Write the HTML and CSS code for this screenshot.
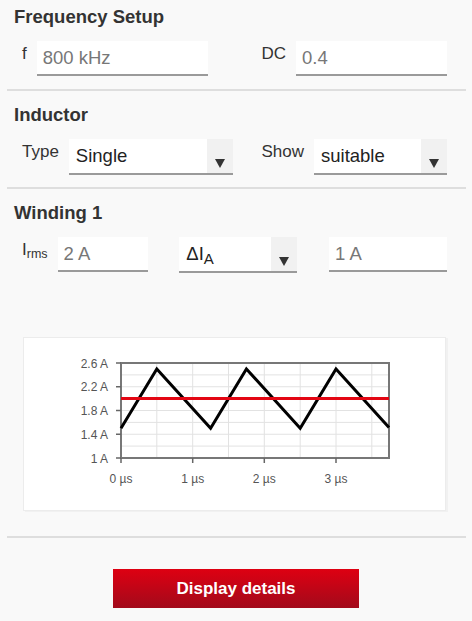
FILE: index.html
```html
<!DOCTYPE html>
<html>
<head>
<meta charset="utf-8">
<link rel="stylesheet" href="styles.css">
</head>
<body>
<section class="section section-first">
  <h2 class="heading">Frequency Setup</h2>
  <div class="row">
    <div class="field"><span class="label">f</span><div class="control input w-f">800 kHz</div></div>
    <div class="field"><span class="label">DC</span><div class="control input w-dc">0.4</div></div>
  </div>
</section>
<section class="section">
  <h2 class="heading">Inductor</h2>
  <div class="row">
    <div class="field"><span class="label">Type</span><div class="control select w-type"><span class="select-text">Single</span><span class="select-arrow"></span></div></div>
    <div class="field"><span class="label">Show</span><div class="control select w-show"><span class="select-text">suitable</span><span class="select-arrow"></span></div></div>
  </div>
</section>
<section class="section section-last">
  <h2 class="heading">Winding 1</h2>
  <div class="row">
    <div class="field"><span class="label">I<sub class="sub-label">rms</sub></span><div class="control input w-irms">2 A</div></div>
    <div class="control select w-delta"><span class="select-text">ΔI<sub class="sub-select">A</sub></span><span class="select-arrow"></span></div>
    <div class="control input w-delta">1 A</div>
  </div>
  <div class="chart-card">
    <svg class="chart" width="421" height="172" viewBox="0 0 421 172">
      <g stroke="#e2e2e2" stroke-width="1">
        <line x1="132.8" y1="25" x2="132.8" y2="120"/>
        <line x1="168.7" y1="25" x2="168.7" y2="120"/>
        <line x1="204.5" y1="25" x2="204.5" y2="120"/>
        <line x1="240.3" y1="25" x2="240.3" y2="120"/>
        <line x1="276.2" y1="25" x2="276.2" y2="120"/>
        <line x1="312" y1="25" x2="312" y2="120"/>
        <line x1="347.8" y1="25" x2="347.8" y2="120"/>
        <line x1="97" y1="36.9" x2="365" y2="36.9"/>
        <line x1="97" y1="48.75" x2="365" y2="48.75"/>
        <line x1="97" y1="60.6" x2="365" y2="60.6"/>
        <line x1="97" y1="72.5" x2="365" y2="72.5"/>
        <line x1="97" y1="84.4" x2="365" y2="84.4"/>
        <line x1="97" y1="96.25" x2="365" y2="96.25"/>
        <line x1="97" y1="108.1" x2="365" y2="108.1"/>
      </g>
      <rect x="97" y="25" width="268" height="95" fill="none" stroke="#777" stroke-width="2"/>
      <g stroke="#666" stroke-width="1.5">
        <line x1="92" y1="25" x2="97" y2="25"/>
        <line x1="92" y1="48.75" x2="97" y2="48.75"/>
        <line x1="92" y1="72.5" x2="97" y2="72.5"/>
        <line x1="92" y1="96.25" x2="97" y2="96.25"/>
        <line x1="92" y1="120" x2="97" y2="120"/>
        <line x1="97" y1="120" x2="97" y2="125"/>
        <line x1="168.7" y1="120" x2="168.7" y2="125"/>
        <line x1="240.3" y1="120" x2="240.3" y2="125"/>
        <line x1="312" y1="120" x2="312" y2="125"/>
      </g>
      <polyline points="97,90.3 132.8,30.9 186.6,90.3 222.4,30.9 276.2,90.3 312,30.9 365,89.5" fill="none" stroke="#000" stroke-width="3" stroke-linejoin="miter"/>
      <line x1="97" y1="60.6" x2="365" y2="60.6" stroke="#e30613" stroke-width="3"/>
      <g class="axis-text" text-anchor="end">
        <text x="84" y="29.5">2.6 A</text>
        <text x="84" y="53.25">2.2 A</text>
        <text x="84" y="77">1.8 A</text>
        <text x="84" y="100.75">1.4 A</text>
        <text x="84" y="124.5">1 A</text>
      </g>
      <g class="axis-text" text-anchor="middle">
        <text x="97" y="145">0 µs</text>
        <text x="168.7" y="145">1 µs</text>
        <text x="240.3" y="145">2 µs</text>
        <text x="312" y="145">3 µs</text>
      </g>
    </svg>
  </div>
</section>
<div class="actions">
  <button class="btn">Display details</button>
</div>
</body>
</html>
```
FILE: styles.css
```css
* { box-sizing: border-box; }

body {
  margin: 0;
  background: #f9f9f9;
  font-family: "Liberation Sans", Arial, sans-serif;
  color: #333;
}

.section {
  margin: 0 6px 0 7px;
  padding: 13px 0 12px;
  border-bottom: 2px solid #dedede;
}

.section-first { padding-top: 6px; padding-bottom: 13px; }
.section-last { padding-bottom: 25px; }

.heading {
  margin: 0 0 13px 7px;
  font-size: 18.5px;
  line-height: 22px;
  font-weight: bold;
  color: #333;
}

.row {
  display: flex;
  justify-content: space-between;
  align-items: flex-start;
  padding: 0 19px 0 15px;
}

.field {
  display: flex;
  align-items: flex-start;
  gap: 10px;
}

.label {
  font-size: 17px;
  line-height: 20px;
  padding-top: 3px;
  color: #333;
}

.sub-label {
  font-size: 12.5px;
  vertical-align: -3px;
  line-height: 0;
}

.control {
  height: 35px;
  background: #fff;
  border-bottom: 2px solid #9a9a9a;
  font-size: 18.5px;
  line-height: 33px;
  padding-left: 6px;
}

.input { color: #777; }

.select {
  display: flex;
  color: #222;
  padding-left: 7px;
  height: 36px;
  line-height: 34px;
}

.select-text { flex: 1; }

.sub-select {
  font-size: 15px;
  vertical-align: -4px;
  line-height: 0;
}

.select-arrow {
  width: 26px;
  background: #f1f1f1;
  display: flex;
  justify-content: center;
  padding-top: 20px;
}

.select-arrow::before {
  content: "";
  width: 0;
  height: 0;
  border-left: 5px solid transparent;
  border-right: 5px solid transparent;
  border-top: 9px solid #333;
}

.w-f { width: 171px; }
.w-dc { width: 151px; }
.w-type { width: 164px; }
.w-show { width: 133px; }
.w-irms { width: 90px; }
.w-delta { width: 118px; }

.chart-card {
  margin: 64px 20px 0 16px;
  height: 174px;
  background: #fff;
  border: 1px solid #ececec;
  box-shadow: 2px 1px 0 #f1f1f1;
}

.chart { display: block; }

.axis-text {
  font-family: "Liberation Sans", Arial, sans-serif;
  font-size: 12px;
  fill: #555;
}

.actions {
  display: flex;
  justify-content: center;
  padding-top: 31px;
}

.btn {
  width: 246px;
  height: 39px;
  border: 0;
  padding: 0;
  background: linear-gradient(#de0012, #a20a1b);
  color: #fff;
  font-family: "Liberation Sans", Arial, sans-serif;
  font-weight: bold;
  font-size: 17px;
}
```
